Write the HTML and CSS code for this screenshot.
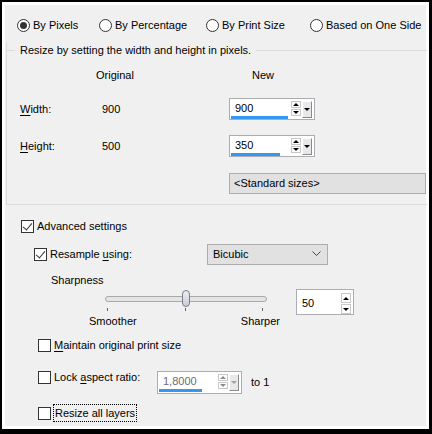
FILE: index.html
```html
<!DOCTYPE html>
<html lang="en">
<head>
    <meta charset="UTF-8">
    <title>Resize</title>
    <link rel="stylesheet" href="styles.css">
</head>
<body>
    <div class="window">
        <div class="modes">
            <label class="radio checked"><span class="circle"></span><span>By Pixels</span></label>
            <label class="radio"><span class="circle"></span><span>By Percentage</span></label>
            <label class="radio"><span class="circle"></span><span>By Print Size</span></label>
            <label class="radio"><span class="circle"></span><span>Based on One Side</span></label>
        </div>

        <div class="group">
            <div class="legend"><span>Resize by setting the width and height in pixels.</span></div>
            <div class="dims">
                <span></span>
                <span class="head">Original</span>
                <span class="head new">New</span>

                <span><u>W</u>idth:</span>
                <span class="val">900</span>
                <div class="spin">
                    <div class="field"><span class="txt">900</span><span class="bar" style="width: 57px;"></span></div>
                    <div class="arrows"><span class="up"></span><span class="down"></span></div>
                    <span class="drop"></span>
                </div>

                <span><u>H</u>eight:</span>
                <span class="val">500</span>
                <div class="spin">
                    <div class="field"><span class="txt">350</span><span class="bar" style="width: 49px;"></span></div>
                    <div class="arrows"><span class="up"></span><span class="down"></span></div>
                    <span class="drop"></span>
                </div>
            </div>
            <div class="std">&lt;Standard sizes&gt;</div>
        </div>

        <div class="advanced">
            <label class="check on adv-row"><span class="box"></span><span>Advanced settings</span></label>

            <div class="resample-row">
                <label class="check on"><span class="box"></span><span>Resample <u>u</u>sing:</span></label>
                <div class="combo">Bicubic
                    <svg width="9" height="6" viewBox="0 0 9 6"><polyline points="0.5,0.5 4.5,4.5 8.5,0.5" fill="none" stroke="#444" stroke-width="1"/></svg>
                </div>
            </div>

            <div class="sharp-label">Sharpness</div>

            <div class="sharp-row">
                <div class="slider">
                    <div class="track-area">
                        <div class="track"></div>
                        <div class="thumb"></div>
                    </div>
                    <div class="ticks"><span></span><span></span><span></span></div>
                    <div class="ends"><span>Smoother</span><span>Sharper</span></div>
                </div>
                <div class="spin small">
                    <div class="field"><span class="txt">50</span></div>
                    <div class="arrows tall"><span class="up"></span><span class="down"></span></div>
                </div>
            </div>

            <label class="check maintain"><span class="box"></span><span><u>M</u>aintain original print size</span></label>

            <div class="lock-row">
                <label class="check"><span class="box"></span><span>Lock <u>a</u>spect ratio:</span></label>
                <div class="spin ratio disabled">
                    <div class="field"><span class="txt">1,8000</span><span class="bar" style="width: 43px;"></span></div>
                    <div class="arrows"><span class="up"></span><span class="down"></span></div>
                    <span class="drop"></span>
                </div>
                <span class="to">to 1</span>
            </div>

            <label class="check layers"><span class="box"></span><span class="focus">Resize all layers</span></label>
        </div>
    </div>
</body>
</html>
```

FILE: styles.css
```css
body {
    margin: 0;
    font-family: "Liberation Sans", Arial, sans-serif;
    font-size: 11px;
    color: #000;
}

.window {
    width: 432px;
    height: 434px;
    box-sizing: border-box;
    border-style: solid;
    border-color: #000;
    border-width: 2px 3px 5px 2px;
    background: #f0f0f0;
    box-shadow: inset 0 0 0 3px #fff;
    overflow: hidden;
}

u {
    text-decoration: underline;
    text-underline-offset: 2px;
}

/* mode radios */
.modes {
    display: grid;
    grid-template-columns: 82px 107px 104px 1fr;
    padding: 13px 0 0 15px;
    height: 20px;
}

.radio {
    display: flex;
    align-items: center;
    gap: 3px;
    line-height: 20px;
    white-space: nowrap;
}

.circle {
    width: 13px;
    height: 13px;
    box-sizing: border-box;
    border: 1px solid #333;
    border-radius: 50%;
    background: #fff;
    display: flex;
    align-items: center;
    justify-content: center;
}

.radio.checked .circle::after {
    content: "";
    width: 7px;
    height: 7px;
    border-radius: 50%;
    background: #333;
}

/* group box */
.group {
    margin: 15px 0 0 4px;
    width: 420px;
    border-left: 1px solid #dcdcdc;
    border-bottom: 1px solid #dcdcdc;
    padding-bottom: 10px;
}

.legend {
    display: flex;
    align-items: center;
    height: 16px;
    margin-top: -8px;
}

.legend::before {
    content: "";
    width: 8px;
    border-top: 1px solid #dcdcdc;
}

.legend span {
    padding: 0 5px;
}

.legend::after {
    content: "";
    flex: 1;
    border-top: 1px solid #dcdcdc;
}

.dims {
    display: grid;
    grid-template-columns: 76px 133px 1fr;
    grid-template-rows: 16px 22px 22px;
    row-gap: 15px;
    align-items: center;
    padding: 9px 0 0 13px;
}

.head.new {
    padding-left: 23px;
}

.val {
    padding-left: 6px;
}

/* spin edit */
.spin {
    display: flex;
    align-items: flex-start;
    width: 86px;
    height: 22px;
    box-sizing: border-box;
    border: 1px solid #abadb3;
    background: #fff;
    padding: 1px 2px 0 1px;
}

.field {
    flex: 1;
    display: flex;
    flex-direction: column;
}

.txt {
    line-height: 14px;
    padding: 1px 0 0 4px;
}

.bar {
    height: 3px;
    margin-top: 1px;
    background: #3598f0;
}

.arrows {
    display: flex;
    flex-direction: column;
    gap: 1px;
    width: 10px;
    margin-top: 1px;
}

.arrows span {
    border: 1px solid #c8c8c8;
    box-sizing: border-box;
    height: 7px;
    display: flex;
    align-items: center;
    justify-content: center;
}

.arrows .up::after {
    content: "";
    border-left: 3px solid transparent;
    border-right: 3px solid transparent;
    border-bottom: 3px solid #000;
}

.arrows .down::after {
    content: "";
    border-left: 3px solid transparent;
    border-right: 3px solid transparent;
    border-top: 3px solid #000;
}

.drop {
    width: 10px;
    height: 17px;
    margin: 1px 0 0 1px;
    box-sizing: border-box;
    background: #e8e8e8;
    border: 1px solid;
    border-color: #fff #8a8a8a #8a8a8a #fff;
    display: flex;
    align-items: center;
    justify-content: center;
}

.drop::after {
    content: "";
    border-left: 3px solid transparent;
    border-right: 3px solid transparent;
    border-top: 3px solid #000;
}

.std {
    margin: 16px 0 0 222px;
    width: 197px;
    height: 21px;
    box-sizing: border-box;
    border: 1px solid #adadad;
    background: #e1e1e1;
    padding-left: 4px;
    line-height: 19px;
}

/* advanced settings */
.advanced {
    padding-left: 19px;
}

.check {
    display: flex;
    align-items: center;
    gap: 3px;
    line-height: 16px;
    white-space: nowrap;
}

.box {
    width: 13px;
    height: 13px;
    box-sizing: border-box;
    border: 1px solid #333;
    background: #fff;
    flex-shrink: 0;
    position: relative;
}

.check.on .box::after {
    content: "";
    position: absolute;
    left: 3px;
    top: 0px;
    width: 4px;
    height: 8px;
    border-right: 1px solid #333;
    border-bottom: 1px solid #333;
    transform: rotate(40deg);
}

.adv-row {
    margin-top: 11px;
    height: 20px;
}

.resample-row {
    display: flex;
    align-items: center;
    margin: 7px 0 0 13px;
    height: 22px;
}

.resample-row .check {
    width: 173px;
}

.combo {
    display: flex;
    align-items: center;
    justify-content: space-between;
    width: 121px;
    height: 21px;
    box-sizing: border-box;
    border: 1px solid #adadad;
    background: #e1e1e1;
    padding: 0 6px 0 5px;
}

.sharp-label {
    margin: 7px 0 0 30px;
    line-height: 16px;
}

.sharp-row {
    display: flex;
    align-items: flex-start;
    margin: 1px 0 0 68px;
}

.slider {
    width: 191px;
}

.track-area {
    position: relative;
    height: 18px;
}

.track {
    position: absolute;
    left: 16px;
    right: 13px;
    top: 7px;
    height: 4px;
    border: 1px solid #a8a8a8;
    border-radius: 3px;
    background: #e4e4e4;
}

.thumb {
    position: absolute;
    left: 93px;
    top: 1px;
    width: 6px;
    height: 15px;
    border: 1px solid #7d7d8a;
    border-radius: 4px;
    background: linear-gradient(#eceef4, #c9ccd8);
}

.ticks {
    display: flex;
    justify-content: space-between;
    padding: 0 17px 0 18px;
    height: 6px;
}

.ticks span {
    width: 1px;
    height: 3px;
    margin-top: 1px;
    background: #666;
}

.ends {
    display: flex;
    justify-content: space-between;
    line-height: 16px;
}

.spin.small {
    width: 58px;
    height: 26px;
    margin-left: 16px;
    padding: 2px 2px 0 1px;
}

.spin.small .txt {
    line-height: 20px;
    padding-top: 1px;
}

.arrows.tall span {
    height: 10px;
}

.maintain {
    margin: 8px 0 0 17px;
}

.lock-row {
    display: flex;
    align-items: flex-start;
    margin: 18px 0 0 17px;
}

.lock-row .check {
    width: 119px;
    line-height: 13px;
}

.spin.ratio {
    width: 85px;
    height: 23px;
}

.spin.disabled .txt {
    color: #6d6d6d;
}

.spin.disabled .arrows span::after {
    border-top-color: #8a8a8a;
    border-bottom-color: #8a8a8a;
}

.spin.disabled .drop::after {
    border-top-color: #a0a0a0;
}

.to {
    line-height: 23px;
    margin-left: 9px;
}

.layers {
    margin: 11px 0 0 17px;
}

.focus {
    outline: 1px dotted #000;
    outline-offset: 0;
    padding: 0 1px;
}
```
